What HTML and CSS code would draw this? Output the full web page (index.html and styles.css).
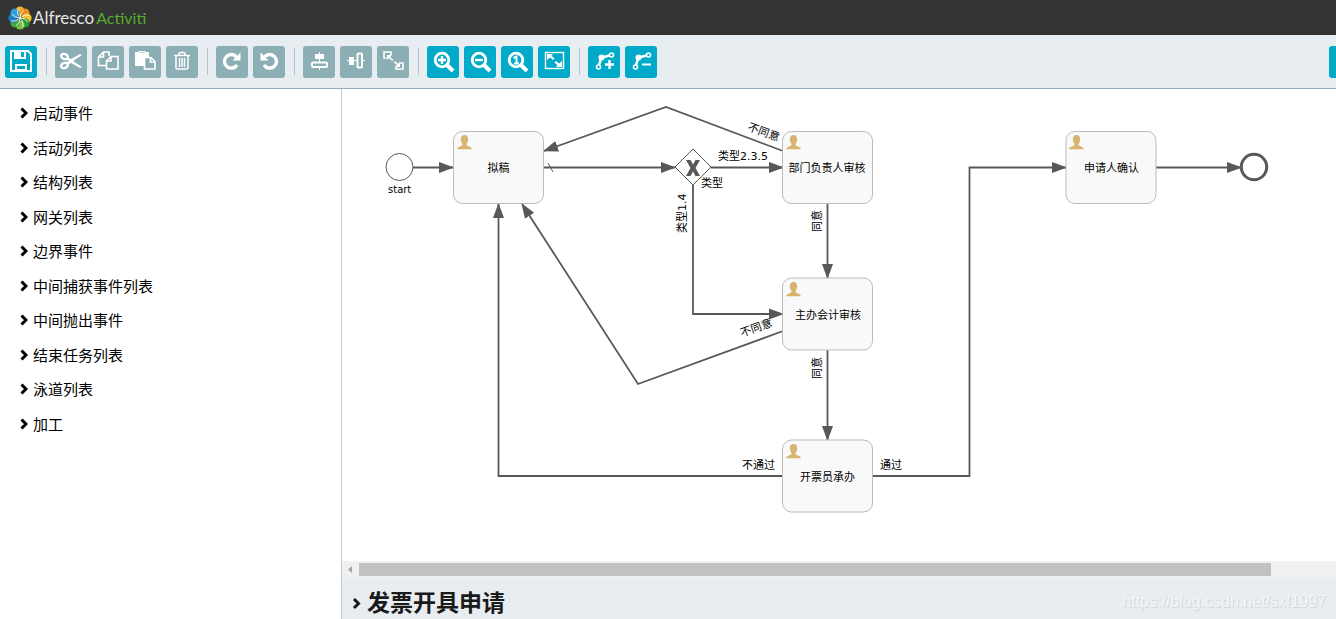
FILE: index.html
```html
<!DOCTYPE html>
<html lang="zh-CN">
<head>
<meta charset="utf-8">
<title>Alfresco Activiti</title>
<link rel="stylesheet" href="styles.css">
</head>
<body>
<div class="app">
  <header class="header">
    <a class="brand" href="#">
      <svg class="brand-mark" viewBox="0 0 24 24" aria-hidden="true">
        <g transform="translate(12 12)">
          <circle cx="0" cy="-7" r="4.600" fill="#f9b233"/>
          <circle cx="5" cy="-5" r="4.600" fill="#f08a1d"/>
          <circle cx="7" cy="0" r="4.600" fill="#f6c32d"/>
          <circle cx="5" cy="5" r="4.600" fill="#2f9a3c"/>
          <circle cx="0" cy="7" r="4.600" fill="#7fc241"/>
          <circle cx="-5" cy="5" r="4.600" fill="#3fa648"/>
          <circle cx="-7" cy="0" r="4.600" fill="#1c7fc4"/>
          <circle cx="-5" cy="-5" r="4.600" fill="#2f9bdc"/>
          <path d="M0 0Q-4-4-2-9M0 0Q0-5 4-8M0 0Q4-4 9-3M0 0Q5 0 8 4M0 0Q4 4 3 9M0 0Q0 5-4 8M0 0Q-4 4-9 3M0 0Q-5 0-8-4" fill="none" stroke="#f3f8e8" stroke-width=".9"/>
        </g>
      </svg>
      <span class="brand-name">Alfresco</span>
      <span class="brand-product">Activiti</span>
    </a>
  </header>

  <div class="toolbar" role="toolbar">
    <div class="tool-group">
      <button class="tool" aria-label="Save"><svg viewBox="0 0 32 32"><path fill="none" stroke="#fff" stroke-width="2" d="M6 5h17l3 3v17H6z"/><path fill="#fff" d="M9 5h12v8H9zM10 18h12v8H10z"/><path fill="#00aac8" d="M16 6h3v5h-3zM12 20h8v3h-8z"/></svg></button>
    </div>
    <div class="tool-group">
      <button class="tool" aria-label="Cut" disabled><svg viewBox="0 0 32 32"><g fill="none" stroke="#fff" stroke-width="2.400"><ellipse cx="9.500" cy="10.500" rx="3.500" ry="2.500" transform="rotate(22 9.500 10.500)"/><ellipse cx="9.500" cy="19.500" rx="3.500" ry="2.500" transform="rotate(-22 9.500 19.500)"/></g><path fill="#fff" d="M12 11l4 2 9-5 2 1-9 6 9 6-2 1-9-5-4 2-1-2 3-2-3-2z"/></svg></button>
      <button class="tool" aria-label="Copy" disabled><svg viewBox="0 0 32 32"><g fill="none" stroke="#fff" stroke-width="1.600"><path d="M14 19.500H6.500V11l5-5H17v4M11.500 6v5h-5"/><path fill="#8cafb5" d="M14.500 15l4.500-4.500h7V23H14.500zM19 10.500V15h-4.500"/></g></svg></button>
      <button class="tool" aria-label="Paste" disabled><svg viewBox="0 0 32 32"><path fill="#fff" d="M6 6h3l1-1h6l1 1h3v5h-5v9H6z"/><path fill="#c2d5d8" d="M10 6h6v1h-6z"/><path fill="#8cafb5" stroke="#fff" stroke-width="1.600" d="M15.500 11.500H22l4 4V23H15.500z"/><path fill="none" stroke="#fff" stroke-width="1.600" d="M21.500 11.500V16H26"/></svg></button>
      <button class="tool" aria-label="Delete" disabled><svg viewBox="0 0 32 32"><g fill="none" stroke="#fff" stroke-width="1.500"><path d="M8 9.500h16M13 9V7.500L14 6.500h4l1 1V9M10 10v12l1 1h10l1-1V10M13.500 12v9M16 12v9M18.500 12v9"/></g></svg></button>
    </div>
    <div class="tool-group">
      <button class="tool" aria-label="Redo" disabled><svg viewBox="0 0 32 32"><path fill="none" stroke="#fff" stroke-width="3.400" d="M21 19a6.800 6.800 0 1 1-.5-8"/><path fill="#fff" d="M24.500 6.500v8h-8z"/></svg></button>
      <button class="tool" aria-label="Undo" disabled><svg viewBox="0 0 32 32"><path fill="none" stroke="#fff" stroke-width="3.400" d="M11 19a6.800 6.800 0 1 0 .5-8"/><path fill="#fff" d="M7.500 6.500v8h8z"/></svg></button>
    </div>
    <div class="tool-group">
      <button class="tool" aria-label="Align vertical" disabled><svg viewBox="0 0 32 32"><path fill="#fff" d="M16 6h1v2h4v5h-4v3h-1v-3h-4V8h4zM16 22h1v2h-1z"/><rect x="9" y="16.500" width="15" height="4.500" rx="1" fill="none" stroke="#fff" stroke-width="2"/></svg></button>
      <button class="tool" aria-label="Align horizontal" disabled><svg viewBox="0 0 32 32"><path fill="#fff" d="M7 14h2v-3h5v3h3v1h-3v4H9v-4H7zM23 14h2v1h-2z"/><rect x="17.500" y="7.500" width="4.500" height="14" rx="1" fill="none" stroke="#fff" stroke-width="2"/></svg></button>
      <button class="tool" aria-label="Same size" disabled><svg viewBox="0 0 32 32"><g fill="none" stroke="#fff" stroke-width="1.600"><path d="M9.500 12H7V6h7v3M22 17h4v6h-7v-3"/><path d="M12 11l9 8" stroke-dasharray="5 2"/></g><path fill="#fff" d="M10 9h5l-5 5zM23 21h-5l5-5z"/></svg></button>
    </div>
    <div class="tool-group">
      <button class="tool" aria-label="Zoom in"><svg viewBox="0 0 32 32"><circle cx="15" cy="14" r="6.800" fill="none" stroke="#fff" stroke-width="2.800"/><path d="M20 19l6 6" stroke="#fff" stroke-width="4"/><path d="M11 14h8M15 10v8" stroke="#fff" stroke-width="2.400"/></svg></button>
      <button class="tool" aria-label="Zoom out"><svg viewBox="0 0 32 32"><circle cx="15" cy="14" r="6.800" fill="none" stroke="#fff" stroke-width="2.800"/><path d="M20 19l6 6" stroke="#fff" stroke-width="4"/><path d="M11 14h8" stroke="#fff" stroke-width="2.400"/></svg></button>
      <button class="tool" aria-label="Zoom to actual size"><svg viewBox="0 0 32 32"><circle cx="15" cy="14" r="6.800" fill="none" stroke="#fff" stroke-width="2.800"/><path d="M20 19l6 6" stroke="#fff" stroke-width="4"/><path d="M12.500 12l3-1.500V18M13 17.500h5" fill="none" stroke="#fff" stroke-width="2"/></svg></button>
      <button class="tool" aria-label="Zoom to fit"><svg viewBox="0 0 32 32"><rect x="7.500" y="6.500" width="18" height="16" fill="none" stroke="#fff" stroke-width="1.400"/><path fill="#fff" d="M9 8h6l-1.500 1.800 3 2.700-1.500 1.500-3-2.500L9 14zM24 21h-6l1.500-1.800-3-2.700 1.500-1.500 3 2.500 3-2.500z"/></svg></button>
    </div>
    <div class="tool-group">
      <button class="tool" aria-label="Add bend point"><svg viewBox="0 0 32 32"><g fill="none" stroke="#fff" stroke-width="1.600"><path d="M11 19l2.500-7.500 8-2" stroke-width="2.400"/><circle cx="10.500" cy="21" r="2"/><circle cx="23.500" cy="9" r="2"/><path d="M17 18.500h9M21.500 14v9" stroke-width="2.400"/></g><circle cx="13.500" cy="11.500" r="3" fill="#fff"/></svg></button>
      <button class="tool" aria-label="Remove bend point"><svg viewBox="0 0 32 32"><g fill="none" stroke="#fff" stroke-width="1.600"><path d="M11 19l2.500-7.500 8-2" stroke-width="2.400"/><circle cx="10.500" cy="21" r="2"/><circle cx="23.500" cy="9" r="2"/><path d="M17 18.500h9" stroke-width="2"/></g><circle cx="13.500" cy="11.500" r="3" fill="#fff"/></svg></button>
    </div>
    <div class="tool-end"><button class="tool" aria-label="Close"></button></div>
  </div>

  <div class="workspace">
    <nav class="palette">
      <ul class="palette-list">
        <li class="palette-item"><button class="palette-toggle"><svg class="chevron" viewBox="0 0 8 12"><path d="M1.500 1.500L6 6l-4.500 4.500"/></svg>启动事件</button></li>
        <li class="palette-item"><button class="palette-toggle"><svg class="chevron" viewBox="0 0 8 12"><path d="M1.500 1.500L6 6l-4.500 4.500"/></svg>活动列表</button></li>
        <li class="palette-item"><button class="palette-toggle"><svg class="chevron" viewBox="0 0 8 12"><path d="M1.500 1.500L6 6l-4.500 4.500"/></svg>结构列表</button></li>
        <li class="palette-item"><button class="palette-toggle"><svg class="chevron" viewBox="0 0 8 12"><path d="M1.500 1.500L6 6l-4.500 4.500"/></svg>网关列表</button></li>
        <li class="palette-item"><button class="palette-toggle"><svg class="chevron" viewBox="0 0 8 12"><path d="M1.500 1.500L6 6l-4.500 4.500"/></svg>边界事件</button></li>
        <li class="palette-item"><button class="palette-toggle"><svg class="chevron" viewBox="0 0 8 12"><path d="M1.500 1.500L6 6l-4.500 4.500"/></svg>中间捕获事件列表</button></li>
        <li class="palette-item"><button class="palette-toggle"><svg class="chevron" viewBox="0 0 8 12"><path d="M1.500 1.500L6 6l-4.500 4.500"/></svg>中间抛出事件</button></li>
        <li class="palette-item"><button class="palette-toggle"><svg class="chevron" viewBox="0 0 8 12"><path d="M1.500 1.500L6 6l-4.500 4.500"/></svg>结束任务列表</button></li>
        <li class="palette-item"><button class="palette-toggle"><svg class="chevron" viewBox="0 0 8 12"><path d="M1.500 1.500L6 6l-4.500 4.500"/></svg>泳道列表</button></li>
        <li class="palette-item"><button class="palette-toggle"><svg class="chevron" viewBox="0 0 8 12"><path d="M1.500 1.500L6 6l-4.500 4.500"/></svg>加工</button></li>
      </ul>
    </nav>

    <main class="editor">
      <div class="canvas">
        <svg class="diagram" viewBox="342 89 994 472" preserveAspectRatio="xMinYMin meet">
          <defs>
            <marker id="arrow" markerUnits="userSpaceOnUse" markerWidth="15" markerHeight="12" refX="14" refY="6" orient="auto"><path d="M0 .5L15 6 0 11.500z" fill="#585858"/></marker>
            <symbol id="user" viewBox="0 0 15 15"><path d="M7.500 0C10 0 11.200 1.700 11.200 4.300c0 2-.6 3.400-1.600 4.400v1.500c1.500 1.200 4.900 1.500 5.400 4.100H0c.5-2.600 3.900-2.900 5.400-4.100V8.700C4.400 7.700 3.800 6.300 3.800 4.300 3.800 1.700 5 0 7.500 0z" fill="#d9b370"/></symbol>
          </defs>

          <g class="flow">
            <path d="M413 167.500H453"/>
            <path d="M543 167.500H675"/>
            <path d="M783 151L666 107 544 151"/>
            <path d="M711 167.500H783"/>
            <path d="M693 185V314H783"/>
            <path d="M827.500 204V278"/>
            <path d="M783 331L638 384 522 204"/>
            <path d="M827.500 350V440"/>
            <path d="M783 476H498.500V204"/>
            <path d="M873 476H969.500V167.500H1066"/>
            <path d="M1156 167.500H1241"/>
          </g>
          <path class="default-mark" d="M548 163L553 172"/>

          <circle class="event" cx="399.500" cy="167" r="13.500"/>
          <circle class="event event-end" cx="1254" cy="167" r="12.700"/>
          <path class="event" d="M693 149L711 167 693 185 675 167z"/>
          <path d="M686 160h4.500l2.500 4.500 2.500-4.500h4.500l-4.500 8 4.500 8h-4.500l-2.500-4.500-2.500 4.500H686l4.500-8z" fill="#585858"/>

          <g class="task"><rect x="453.500" y="131.500" width="90" height="72" rx="9"/><use href="#user" x="457" y="135" width="15" height="15"/><text x="498.500" y="172">拟稿</text></g>
          <g class="task"><rect x="782.500" y="131.500" width="90" height="72" rx="9"/><use href="#user" x="786" y="135" width="15" height="15"/><text x="827" y="172">部门负责人审核</text></g>
          <g class="task"><rect x="782.500" y="278" width="90" height="72" rx="9"/><use href="#user" x="786" y="282" width="15" height="15"/><text x="828" y="319">主办会计审核</text></g>
          <g class="task"><rect x="782.500" y="440" width="90" height="72" rx="9"/><use href="#user" x="786" y="444" width="15" height="15"/><text x="827.500" y="481">开票员承办</text></g>
          <g class="task"><rect x="1066" y="131.500" width="90" height="72" rx="9"/><use href="#user" x="1069" y="135" width="15" height="15"/><text x="1111.500" y="172">申请人确认</text></g>

          <g class="label">
            <text class="label-event" x="388" y="193">start</text>
            <text x="718" y="160">类型2.3.5</text>
            <text x="701" y="187">类型</text>
            <text transform="translate(686 233) rotate(-90)">类型1.4</text>
            <text transform="translate(821 232) rotate(-90)">同意</text>
            <text transform="translate(821 379) rotate(-90)">同意</text>
            <text transform="translate(747 130) rotate(20)">不同意</text>
            <text transform="translate(742 337) rotate(-20)">不同意</text>
            <text x="742" y="469">不通过</text>
            <text x="880" y="469">通过</text>
          </g>
        </svg>
      </div>
      <div class="scrollbar">
        <svg class="scroll-arrow" viewBox="0 0 17 17"><path d="M10 5v7L6 8.500z" fill="#a3a3a3"/></svg>
        <div class="scroll-track"><div class="scroll-thumb"></div></div>
      </div>
      <footer class="properties">
        <h2 class="properties-title"><button class="properties-toggle"><svg class="chevron chevron-large" viewBox="0 0 10 16"><path d="M2 5l4.500 4.500L2 14"/></svg>发票开具申请</button></h2>
        <span class="watermark">https://blog.csdn.net/sxf1997</span>
      </footer>
    </main>
  </div>
</div>
</body>
</html>
```
FILE: styles.css
```css
* { box-sizing: border-box; }

body {
  margin: 0;
  font-family: "Noto Sans", "Noto Sans CJK SC", sans-serif;
  color: #000;
  background: #fff;
}

button {
  padding: 0;
  border: 0;
  background: none;
  color: inherit;
  font: inherit;
}

.app {
  display: flex;
  flex-direction: column;
  height: 100vh;
  overflow: hidden;
}

.header {
  display: flex;
  align-items: center;
  flex: none;
  height: 35px;
  padding-left: 8px;
  background: #333;
}

.brand {
  display: flex;
  align-items: center;
  font-family: "Liberation Sans Narrow", Lato, sans-serif;
  font-size: 17px;
  line-height: 20px;
  text-decoration: none;
}

.brand-mark { width: 24px; height: 24px; }
.brand-name { padding-left: 1px; color: #e6e6e6; }
.brand-product { padding-left: 2px; font-size: 16px; color: #56ab30; }

.toolbar {
  display: flex;
  flex: none;
  align-items: center;
  height: 54px;
  padding-left: 5px;
  background: #e8edf1;
  border-bottom: 1px solid #9aabb9;
  overflow: hidden;
}

.tool-group { display: flex; align-items: center; gap: 5px; }

.tool-group + .tool-group::before {
  content: "";
  width: 1px;
  height: 27px;
  margin-left: 9px;
  margin-right: 3px;
  background: #b9c3ce;
}

.tool {
  flex: none;
  width: 32px;
  height: 32px;
  border-radius: 3px;
  background: #00aac8;
}

.tool:disabled { background: #8cafb5; }
.tool svg { display: block; width: 32px; height: 32px; }
.tool-end { display: flex; margin-left: auto; margin-right: -25px; }

.workspace { display: flex; flex: 1; min-height: 0; }

.palette {
  flex: none;
  width: 342px;
  padding-top: 7px;
  border-right: 1px solid #c4c9ce;
}

.palette-list {
  display: flex;
  flex-direction: column;
  height: 66%;
  margin: 0;
  padding: 0 0 0 20px;
  list-style: none;
}

.palette-item { display: flex; flex: 1; align-items: center; }

.palette-toggle {
  display: flex;
  align-items: center;
  gap: 5px;
  font-size: 15px;
  line-height: 20px;
}

.chevron {
  width: 8px;
  height: 12px;
  fill: none;
  stroke: #000;
  stroke-width: 3;
}

.editor { display: flex; flex: 1; flex-direction: column; min-width: 0; }
.canvas { flex: 1; min-height: 0; overflow: hidden; }
.diagram { display: block; width: 994px; height: 472px; }

.flow path {
  fill: none;
  stroke: #585858;
  stroke-width: 1.8;
  marker-end: url(#arrow);
}

.default-mark { stroke: #585858; stroke-width: 1; }
.event { fill: #fff; stroke: #585858; stroke-width: 1; }
.event-end { stroke-width: 3; }
.task rect { fill: #f9f9f9; stroke: #bbb; stroke-width: 1; }

.task text,
.label text {
  font-family: "DejaVu Sans", "Noto Sans CJK SC", sans-serif;
  font-size: 11px;
  fill: #000;
}

.task text { text-anchor: middle; }
.label .label-event { font-size: 10px; }

.scrollbar {
  display: flex;
  flex: none;
  height: 17px;
  background: #f0f0f0;
}

.scroll-arrow { flex: none; width: 17px; height: 17px; }
.scroll-track { flex: 1; padding: 2px 0; }
.scroll-thumb { width: 93.35%; height: 13px; background: #c1c1c1; }

.properties {
  display: flex;
  flex: none;
  align-items: center;
  justify-content: space-between;
  padding: 8px 10px 1px;
  background: #e8edf1;
}

.properties-title { margin: 0; font-size: 23px; font-weight: 700; line-height: 32px; color: #1a1a1a; }
.properties-toggle { display: flex; align-items: center; gap: 5px; }
.chevron-large { width: 10px; height: 16px; stroke: #1a1a1a; }

.watermark {
  font-family: "Liberation Sans", sans-serif;
  font-size: 16px;
  line-height: 20px;
  color: #f4f6f8;
  text-shadow: 1px 1px 1px #ccd2d7;
}
```
